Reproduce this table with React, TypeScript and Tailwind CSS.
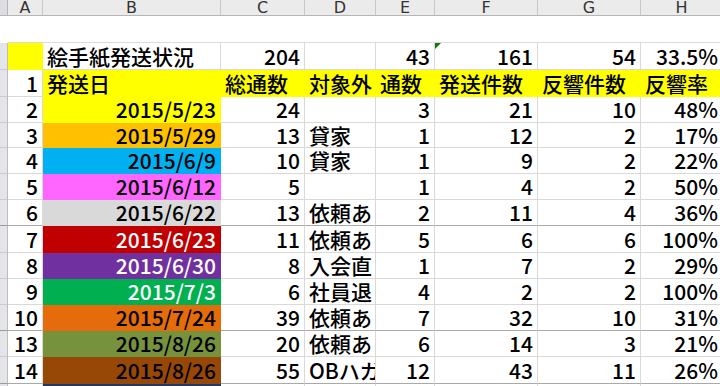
import React from 'react';

type Fill = { bg: string; line: string; text?: string }

type Row = {
  h: string
  a?: string
  date: string
  dateFill?: Fill
  cells: Array<string>
  darkLine?: boolean
}

const yellow: Fill = { bg: 'bg-[#ffff00]', line: 'border-[#ffff00]' }

const gridCols = 'grid grid-cols-[8px_35px_178px_84px_71px_59px_103px_103px_82px]'
const font = 'font-["Noto_Sans_CJK_JP","Noto_Sans",sans-serif]'

const rows: Array<Row> = [
  { h: 'h-[26px]', a: '2', date: '2015/5/23', dateFill: yellow, cells: ['24', '', '3', '21', '10', '48%'] },
  { h: 'h-[25px]', a: '3', date: '2015/5/29', dateFill: { bg: 'bg-[#ffc000]', line: 'border-[#ffc000]' }, cells: ['13', '貸家', '1', '12', '2', '17%'] },
  { h: 'h-[26px]', a: '4', date: '2015/6/9', dateFill: { bg: 'bg-[#00b0f0]', line: 'border-[#00b0f0]' }, cells: ['10', '貸家', '1', '9', '2', '22%'] },
  { h: 'h-[26px]', a: '5', date: '2015/6/12', dateFill: { bg: 'bg-[#ff66ff]', line: 'border-[#ff66ff]' }, cells: ['5', '', '1', '4', '2', '50%'] },
  { h: 'h-[26px]', a: '6', date: '2015/6/22', dateFill: { bg: 'bg-[#d9d9d9]', line: 'border-[#d9d9d9]' }, cells: ['13', '依頼あ', '2', '11', '4', '36%'], darkLine: true },
  { h: 'h-[27px]', a: '7', date: '2015/6/23', dateFill: { bg: 'bg-[#c00000]', line: 'border-[#c00000]', text: 'text-white' }, cells: ['11', '依頼あ', '5', '6', '6', '100%'] },
  { h: 'h-[26px]', a: '8', date: '2015/6/30', dateFill: { bg: 'bg-[#7030a0]', line: 'border-[#7030a0]', text: 'text-white' }, cells: ['8', '入会直', '1', '7', '2', '29%'] },
  { h: 'h-[26px]', a: '9', date: '2015/7/3', dateFill: { bg: 'bg-[#00b050]', line: 'border-[#00b050]', text: 'text-white' }, cells: ['6', '社員退', '4', '2', '2', '100%'] },
  { h: 'h-[26px]', a: '10', date: '2015/7/24', dateFill: { bg: 'bg-[#e46c0a]', line: 'border-[#e46c0a]' }, cells: ['39', '依頼あ', '7', '32', '10', '31%'], darkLine: true },
  { h: 'h-[26px]', a: '13', date: '2015/8/26', dateFill: { bg: 'bg-[#76923c]', line: 'border-[#76923c]' }, cells: ['20', '依頼あ', '6', '14', '3', '21%'] },
  { h: 'h-[27px]', a: '14', date: '2015/8/26', dateFill: { bg: 'bg-[#974806]', line: 'border-[#974806]' }, cells: ['55', 'OBハガ', '12', '43', '11', '26%'], darkLine: true },
  { h: 'h-[26px]', a: '', date: '', dateFill: { bg: 'bg-[#1f3864]', line: 'border-[#1f3864]' }, cells: ['', '', '', '', '', ''] },
]

const Cell = (props: { v?: string, right?: boolean, fill?: Fill, dark?: boolean, children?: React.ReactNode }) => {
  const f = props.fill
  const lines = f ? `${f.bg} ${f.line}` : (props.dark ? 'border-r-[#d9d9d9] border-b-[#a9a9a9]' : 'border-[#d9d9d9]')
  return <div className={`relative flex items-center overflow-hidden whitespace-nowrap px-[4px] border-r border-b leading-none ${lines} ${f?.text ?? 'text-black'} ${props.right ? 'justify-end' : 'justify-start'}`}>
    {props.children}
    {props.v}
  </div>
}

const RowHead = (props: { blank?: boolean, dark?: boolean }) => {
  if (props.blank) return <div className="bg-white" />
  return <div className={`bg-[#e3e5e8] border-r border-r-[#bcbcbc] border-b ${props.dark ? 'border-b-[#9a9a9a]' : 'border-b-[#cacaca]'}`} />
}

export default function App() {
  const letters = ['A', 'B', 'C', 'D', 'E', 'F', 'G', 'H']
  return <div className={`w-[720px] h-[386px] overflow-hidden bg-white text-[21px] font-medium ${font}`}>
    {/* column letters */}
    <div className={`${gridCols} h-[16px]`}>
      <div className="bg-[#dcdee1] border-r border-b border-[#b5b5b5]" />
      {letters.map((l) => (
        <div key={l} className='flex items-start justify-center overflow-hidden bg-[#ebebeb] border-r border-r-[#c8c8c8] border-b border-b-[#b5b5b5] text-[16px] font-normal leading-[15px] text-[#333] font-["DejaVu_Sans",sans-serif]'>
          {l}
        </div>
      ))}
    </div>

    {/* empty row */}
    <div className={`${gridCols} h-[27px]`}>
      <RowHead blank />
      <div className="col-span-8 border-b border-[#dcdcdc]" />
    </div>

    {/* title row */}
    <div className={`${gridCols} h-[27px]`}>
      <RowHead />
      <Cell fill={yellow} />
      <Cell v="絵手紙発送状況" />
      <Cell v="204" right />
      <Cell />
      <Cell v="43" right />
      <Cell v="161" right>
        <span className="absolute left-0 top-0 w-[6px] h-[6px] bg-[#107c10] [clip-path:polygon(0_0,100%_0,0_100%)]" />
      </Cell>
      <Cell v="54" right />
      <Cell v="33.5%" right />
    </div>

    {/* header row */}
    <div className={`${gridCols} h-[27px]`}>
      <RowHead />
      <Cell v="1" right />
      <Cell v="発送日" fill={yellow} />
      <Cell v="総通数" fill={yellow} />
      <Cell v="対象外" fill={yellow} />
      <Cell v="通数" fill={yellow} />
      <Cell v="発送件数" fill={yellow} />
      <Cell v="反響件数" fill={yellow} />
      <Cell v="反響率" fill={yellow} />
    </div>

    {rows.map((r, i) => (
      <div key={i} className={`${gridCols} ${r.h}`}>
        <RowHead dark={r.darkLine} />
        <Cell v={r.a} right dark={r.darkLine} />
        <Cell v={r.date} right fill={r.dateFill} />
        <Cell v={r.cells[0]} right dark={r.darkLine} />
        <Cell v={r.cells[1]} dark={r.darkLine} />
        <Cell v={r.cells[2]} right dark={r.darkLine} />
        <Cell v={r.cells[3]} right dark={r.darkLine} />
        <Cell v={r.cells[4]} right dark={r.darkLine} />
        <Cell v={r.cells[5]} right dark={r.darkLine} />
      </div>
    ))}
  </div>
}
